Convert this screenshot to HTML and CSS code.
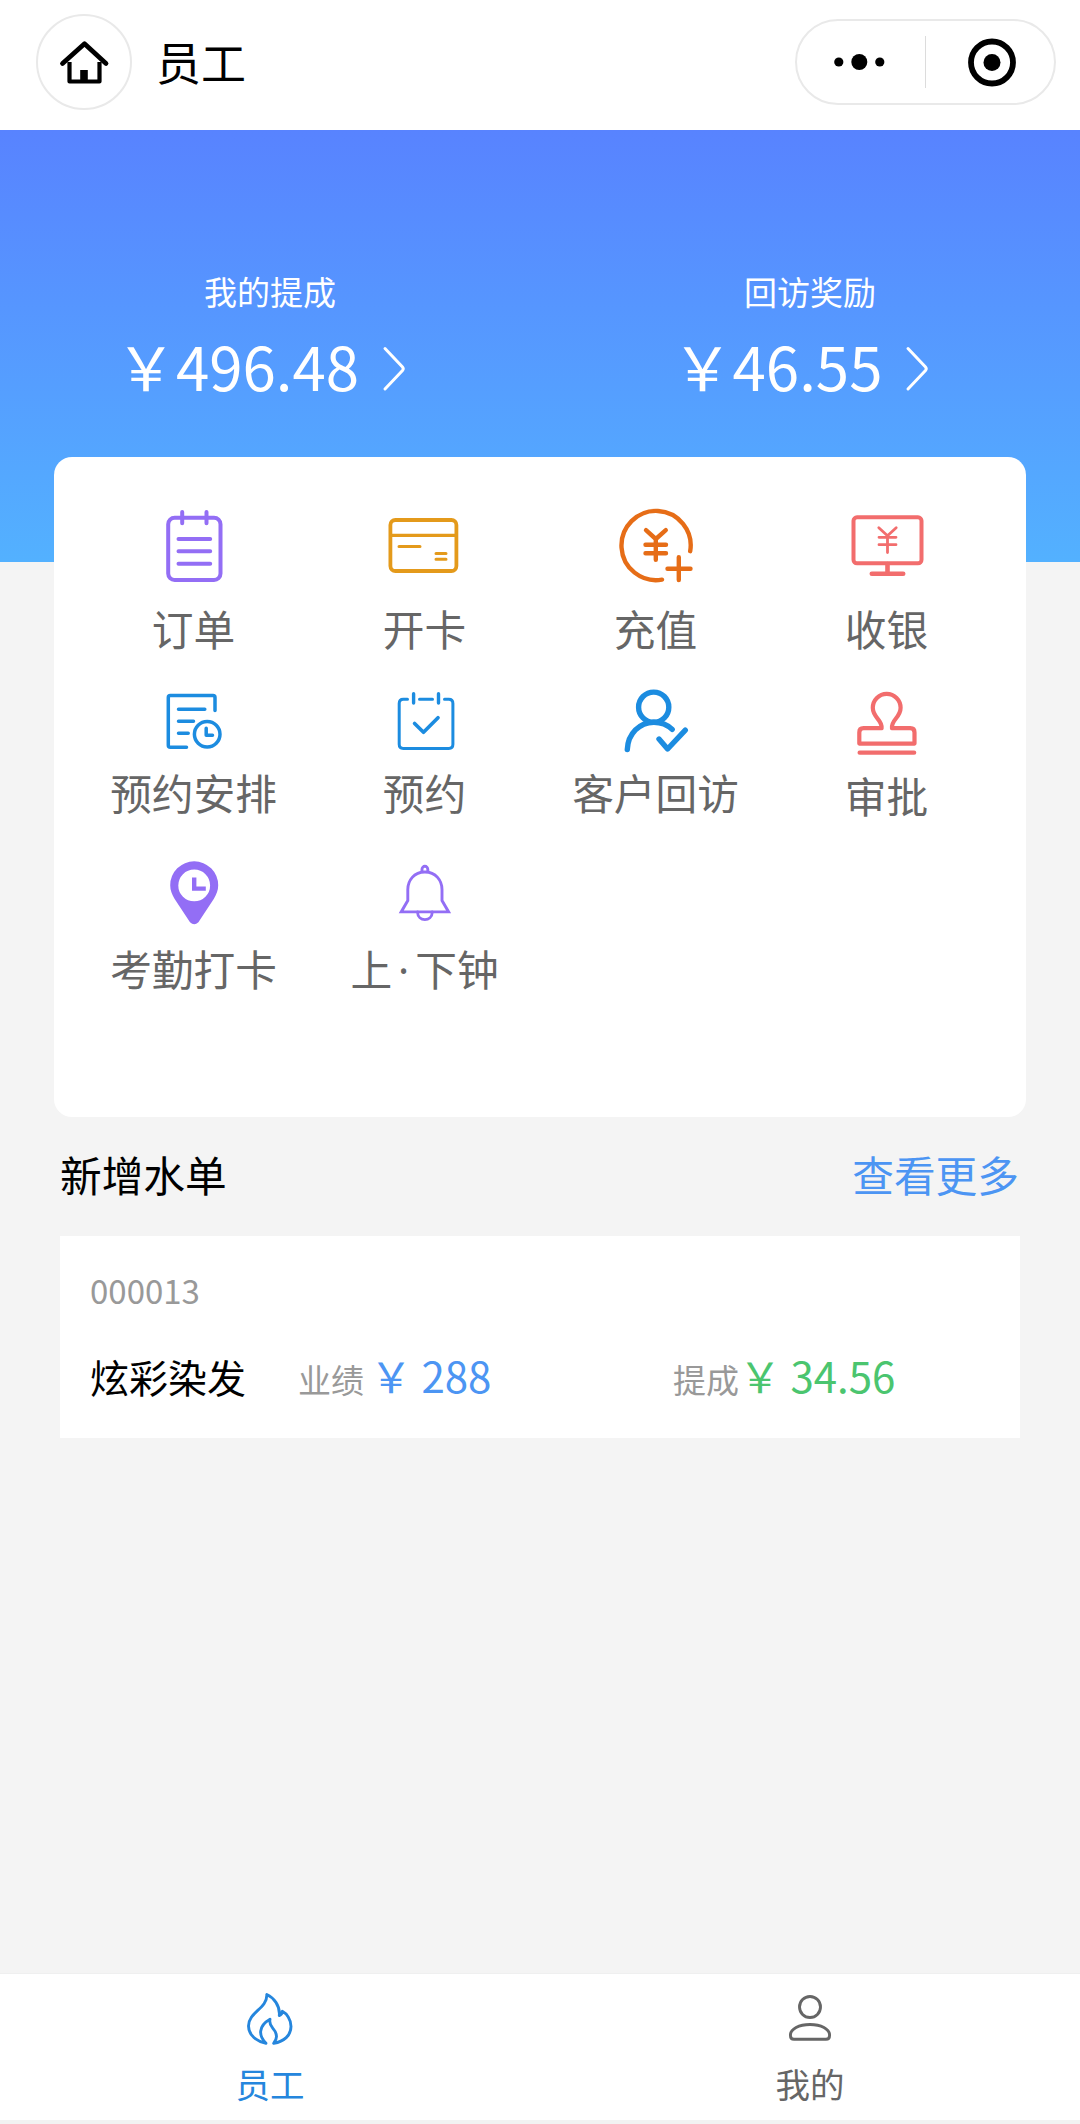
FILE: index.html
```html
<!DOCTYPE html>
<html lang="zh-CN">

<head>
    <meta charset="UTF-8">
    <meta name="viewport" content="width=device-width, initial-scale=1.0">
    <title>员工</title>
    <link rel="stylesheet" href="styles.css">
</head>

<body>
    <header class="navbar">
        <div class="home-btn">
            <svg width="60" height="60" viewBox="0 0 60 60" fill="none" stroke="#000">
                <path d="M15.5 30V49.5H45.5V30" stroke-width="4.2" stroke-linejoin="round" />
                <path d="M8.5 31.5L30.5 11.8L52 31.5" stroke-width="4.8" stroke-linejoin="round" stroke-linecap="round" />
                <path d="M30 38V50" stroke-width="7.6" />
            </svg>
        </div>
        <h1 class="title">员工</h1>
        <div class="capsule">
            <div class="capsule-item">
                <svg width="60" height="60" viewBox="0 0 60 60">
                    <circle cx="7.8" cy="30" r="4.6" />
                    <circle cx="28.3" cy="30" r="8" />
                    <circle cx="48.8" cy="30" r="4.6" />
                </svg>
            </div>
            <div class="capsule-line"></div>
            <div class="capsule-item">
                <svg width="60" height="60" viewBox="0 0 60 60">
                    <circle cx="32" cy="30.5" r="21" fill="none" stroke="#000" stroke-width="5.8" />
                    <circle cx="32" cy="30.5" r="8.5" />
                </svg>
            </div>
        </div>
    </header>

    <section class="banner">
        <div class="income">
            <div class="income-label">我的提成</div>
            <div class="income-value">
                <span>￥496.48</span>
                <svg width="65" height="60" viewBox="0 0 65 60">
                    <path d="M26 13.5L43.5 32Q45 33.8 43.5 35.5L26 54" />
                </svg>
            </div>
        </div>
        <div class="income">
            <div class="income-label">回访奖励</div>
            <div class="income-value">
                <span>￥46.55</span>
                <svg width="65" height="60" viewBox="0 0 65 60">
                    <path d="M26 13.5L43.5 32Q45 33.8 43.5 35.5L26 54" />
                </svg>
            </div>
        </div>
    </section>

    <main class="content">
        <div class="menu">
            <div class="menu-item large purple">
                <svg viewBox="0 0 80 80" stroke-width="4">
                    <rect x="14.2" y="12.7" width="52.3" height="62.3" rx="6.5" />
                    <path d="M28.2 7V18.3M52.5 7V18.3M24.5 34H56.2M24.5 46.3H56.2M24.5 58.7H56.2" />
                </svg>
                <span>订单</span>
            </div>
            <div class="menu-item large yellow">
                <svg viewBox="0 0 80 80" stroke-width="3.8">
                    <rect x="5.4" y="15" width="66" height="51" rx="5" />
                    <path d="M6 30.3H71" stroke-width="3.2" />
                    <path d="M14 41.4H35M51 48.6H61M51 54.3H61" stroke-width="3" />
                </svg>
                <span>开卡</span>
            </div>
            <div class="menu-item large orange">
                <svg viewBox="0 0 80 80" stroke-width="4.4">
                    <path d="M74.2 46.2A34.6 34.6 0 1 0 46 74.6" />
                    <path d="M30 25.2L39.8 34L49.8 25.2M39.8 34V54.8M29.5 39.7H50M29.5 48.3H50" />
                    <path d="M51.5 63.7H74.5M62.8 52.3V75" />
                </svg>
                <span>充值</span>
            </div>
            <div class="menu-item large red">
                <svg viewBox="0 0 80 80" stroke-width="4">
                    <rect x="6.5" y="12.3" width="68" height="46" rx="3.5" />
                    <path d="M40.5 59V68M24.8 68.7H56.2" stroke-width="4.6" />
                    <path d="M31.8 22.8L40.5 30.8L49.2 22.8M40.5 30.8V47.5M32 32.3H49M32 39.7H49" stroke-width="2.8" />
                </svg>
                <span>收银</span>
            </div>

            <div class="menu-item blue">
                <svg viewBox="0 0 72 72" stroke-width="3.5">
                    <path d="M57 24.5V11.5Q57 9.5 55 9.5H12.3Q10.3 9.5 10.3 11.5V59.2Q10.3 61.2 12.3 61.2H28.5" />
                    <path d="M20.5 23.3H46.8M20.5 35.3H35.5M20.5 47.3H30.2" />
                    <circle cx="49.2" cy="48.3" r="12.8" />
                    <path d="M48.2 42.3V49.3H54.5" />
                </svg>
                <span>预约安排</span>
            </div>
            <div class="menu-item blue">
                <svg viewBox="0 0 72 72" stroke-width="3">
                    <path d="M18.5 13.3H14.3Q10.2 13.3 10.2 17.4V58.3Q10.2 62.4 14.3 62.4H59.8Q63.9 62.4 63.9 58.3V17.4Q63.9 13.3 59.8 13.3H55.5M30.5 13.3H43.5" />
                    <path d="M24.6 7.8V17M49.5 7.8V17" stroke-width="3.4" />
                    <path d="M25.6 37.5L34.5 46.2L49 31.8" stroke-width="3.7" />
                </svg>
                <span>预约</span>
            </div>
            <div class="menu-item blue">
                <svg viewBox="0 0 72 72" stroke-width="5.4">
                    <circle cx="33.7" cy="21.2" r="15.1" />
                    <path d="M7.3 63.5C8 47.5 19.5 36.5 33.8 36.2C41 36.2 47.5 38.8 52.2 43.4" />
                    <path d="M39 53L47.6 63L65.3 44.2" />
                </svg>
                <span>客户回访</span>
            </div>
            <div class="menu-item red approve">
                <svg viewBox="0 0 72 72" stroke-width="4.2">
                    <path d="M30.6 42.2C31.5 33.5 21.8 31.8 21.8 21.8A13.9 13.9 0 0 1 49.6 21.8C49.6 31.8 40 33.5 41 42.2H59.3Q63.5 42.2 63.5 46.4V57.6H8.3V46.4Q8.3 42.2 12.5 42.2Z" />
                    <path d="M8.6 66.7H63.2" />
                </svg>
                <span>审批</span>
            </div>

            <div class="menu-item last purple">
                <svg viewBox="0 0 72 72">
                    <path class="solid" d="M36.2 4.3A24 24 0 0 0 12.2 28.3C12.2 33.5 14 37.5 16.5 41.7L32 65.2Q36.2 69.5 40.4 65.2L55.9 41.7C58.4 37.5 60.2 33.5 60.2 28.3A24 24 0 0 0 36.2 4.3ZM36.2 12.5A15.9 15.9 0 1 1 36.2 44.3A15.9 15.9 0 0 1 36.2 12.5Z" />
                    <path class="hands" d="M36.2 20.5V31.6H47.8" />
                </svg>
                <span>考勤打卡</span>
            </div>
            <div class="menu-item last purple">
                <svg viewBox="0 0 72 72" stroke-width="2.9">
                    <path d="M33 14.5V12.2A2.9 2.9 0 0 1 38.8 12.2V14.5" />
                    <path class="bell" d="M35.9 15C25 15 18.8 23.5 18.8 32.5V43.5L12.2 54.9H59.6L53 43.5V32.5C53 23.5 46.8 15 35.9 15Z" />
                    <path d="M28.5 55C28.9 65.2 42.9 65.2 43.3 55" />
                </svg>
                <span>上<i class="dot">·</i>下钟</span>
            </div>
        </div>

        <div class="section-head">
            <h2>新增水单</h2>
            <a class="more">查看更多</a>
        </div>

        <div class="order">
            <div class="order-no">000013</div>
            <div class="order-row">
                <div class="order-name">炫彩染发</div>
                <div class="order-sales">业绩<span class="num blue-num">￥ 288</span></div>
                <div class="order-cut">提成<span class="num green-num">￥ 34.56</span></div>
            </div>
        </div>
    </main>

    <nav class="tabbar">
        <div class="tab active">
            <svg width="60" height="60" viewBox="0 0 60 60">
                <path d="M26.8 4.5C27.5 18.5 8.5 22 8.5 36C8.5 45.5 17 51.5 26 53.3C18.5 46 18 36 30 29.2C28 38 36.5 38 36.5 46.5C36.5 49.5 35 51.5 33.7 53.3C44 51.5 51 45.5 51 36.5C51 29 46.5 23.5 42.3 21.3C42.3 23.3 41 25 39.3 25.5C40.3 15.5 33.5 7.5 26.8 4.5Z" />
            </svg>
            <span>员工</span>
        </div>
        <div class="tab">
            <svg width="60" height="60" viewBox="0 0 60 60">
                <circle cx="30" cy="17" r="10.5" />
                <path d="M14 49.3C11.5 49.3 10.4 47.5 10.4 45.2C10.4 39 19 34.5 30 34.5C41 34.5 49.6 39 49.6 45.2C49.6 47.5 48.5 49.3 46 49.3Z" />
            </svg>
            <span>我的</span>
        </div>
    </nav>
</body>

</html>
```
FILE: styles.css
```css
* {
    box-sizing: border-box;
}

body {
    margin: 0;
    min-height: 100vh;
    display: flex;
    flex-direction: column;
    background: #f4f4f4;
    font-family: "Noto Sans CJK SC", sans-serif;
    color: #000;
}

h1,
h2 {
    margin: 0;
    font-weight: 400;
}

svg {
    display: block;
    flex-shrink: 0;
}

/* top bar */
.navbar {
    display: flex;
    align-items: center;
    height: 130px;
    padding: 0 24px 6px 36px;
    background: #fff;
}

.home-btn {
    display: flex;
    align-items: center;
    justify-content: center;
    width: 96px;
    height: 96px;
    border: 2px solid #e9e9e9;
    border-radius: 50%;
}

.title {
    margin-left: 24px;
    padding-bottom: 1px;
    font-size: 45px;
    line-height: 60px;
}

.capsule {
    display: flex;
    align-items: center;
    width: 261px;
    height: 86px;
    margin-left: auto;
    border: 2px solid #e9e9e9;
    border-radius: 43px;
}

.capsule-item {
    flex: 1;
    display: flex;
    justify-content: center;
}

.capsule-line {
    width: 1px;
    height: 52px;
    background: #dcdcdc;
}

/* banner */
.banner {
    display: flex;
    height: 432px;
    padding-top: 137px;
    background: linear-gradient(#5883ff, #53b1ff);
    color: #fff;
}

.income {
    flex: 1;
    text-align: center;
}

.income-label {
    font-size: 33px;
    line-height: 48px;
}

.income-value {
    display: flex;
    align-items: center;
    justify-content: center;
    margin-top: 20px;
    font-size: 60px;
    line-height: 60px;
}

.income-value path {
    fill: none;
    stroke: #fff;
    stroke-width: 3;
    stroke-linecap: round;
}

/* menu */
.content {
    flex: 1;
    margin-top: -105px;
    padding: 0 54px;
}

.menu {
    display: grid;
    grid-template-columns: repeat(4, 231px);
    grid-template-rows: 181px 171px 140px;
    height: 660px;
    padding: 48px 24px 0;
    background: #fff;
    border-radius: 18px;
}

.menu-item {
    display: flex;
    flex-direction: column;
    align-items: center;
    gap: 10px;
    color: #666;
    font-size: 41.7px;
    line-height: 48px;
}

.menu-item svg {
    width: 72px;
    height: 72px;
    fill: none;
    stroke-linecap: round;
    stroke-linejoin: round;
}

.menu-item.large {
    gap: 19px;
}

.menu-item.large svg {
    width: 80px;
    height: 80px;
}

.menu-item.approve {
    gap: 13px;
}

.menu-item.last {
    gap: 15px;
}

.purple svg {
    stroke: #936ef5;
}

.purple .solid {
    fill: #936ef5;
    stroke: none;
}

.purple .hands {
    stroke-width: 4.4;
    stroke-linecap: butt;
    stroke-linejoin: miter;
}

.purple .bell {
    stroke-linejoin: miter;
}

.yellow svg {
    stroke: #e49a1b;
}

.orange svg {
    stroke: #e66d17;
}

.red svg {
    stroke: #f26d6d;
}

.blue svg {
    stroke: #1c8ce0;
}

.dot {
    margin: 0 6px;
    font-family: "Noto Sans", sans-serif;
    font-style: normal;
}

/* new orders */
.section-head {
    display: flex;
    justify-content: space-between;
    align-items: center;
    height: 119px;
    padding: 0 7px 5px 6px;
}

.section-head h2,
.more {
    font-size: 41.7px;
    line-height: 60px;
}

.more {
    color: #4c95f3;
}

.order {
    height: 202px;
    margin: 0 6px;
    padding: 30px 30px 0;
    background: #fff;
}

.order-no {
    color: #999;
    font-size: 33px;
    line-height: 48px;
}

.order-row {
    display: flex;
    align-items: baseline;
    margin-top: 31px;
    color: #999;
    font-size: 33px;
    line-height: 60px;
}

.order-name {
    width: 208px;
    color: #000;
    font-size: 39px;
}

.order-sales {
    width: 375px;
}

.order-sales .num {
    margin-left: 6px;
}

.num {
    font-size: 42px;
}

.blue-num {
    color: #4c95f3;
}

.green-num {
    color: #4bc56f;
}

/* bottom tabs */
.tabbar {
    display: flex;
    height: 151px;
    border-top: 1px solid #efefef;
    border-bottom: 4px solid #f2f2f2;
    background: #fff;
}

.tab {
    flex: 1;
    display: flex;
    flex-direction: column;
    align-items: center;
    padding-top: 16px;
    color: #666;
    font-size: 34.5px;
    line-height: 48px;
}

.tab svg {
    margin-bottom: 9px;
    fill: none;
    stroke: #666;
    stroke-width: 2.9;
    stroke-linejoin: round;
}

.tab.active {
    color: #2586dd;
}

.tab.active svg {
    stroke: #2586dd;
}
```
